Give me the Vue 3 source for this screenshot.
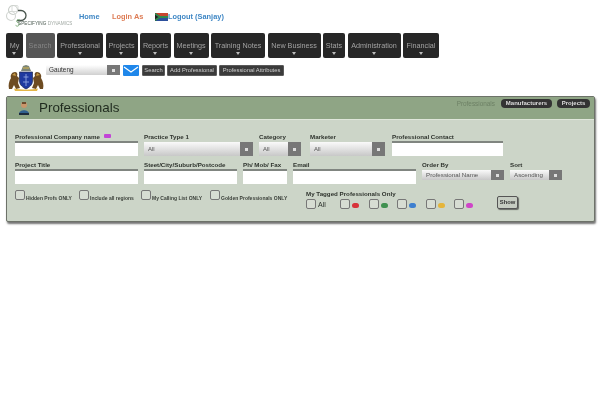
<script setup>
const navItems = [
  { label: 'My', width: 17, arrow: true },
  { label: 'Search', width: 29, active: true },
  { label: 'Professional', width: 46, arrow: true },
  { label: 'Projects', width: 32, arrow: true },
  { label: 'Reports', width: 31, arrow: true },
  { label: 'Meetings', width: 35, arrow: true },
  { label: 'Training Notes', width: 54, arrow: true },
  { label: 'New Business', width: 53, arrow: true },
  { label: 'Stats', width: 22, arrow: true },
  { label: 'Administration', width: 53, arrow: true },
  { label: 'Financial', width: 36, arrow: true }
]
const toolButtons = [
  { label: 'Search', width: 23 },
  { label: 'Add Professional', width: 50 },
  { label: 'Professional Attributes', width: 65 }
]
const row1 = [
  { label: 'Professional Company name', width: 123, gap: 6, tag: true },
  { label: 'Practice Type 1', width: 109, gap: 6, select: 'All' },
  { label: 'Category', width: 42, gap: 9, select: 'All' },
  { label: 'Marketer', width: 75, gap: 7, select: 'All' },
  { label: 'Professional Contact', width: 111, gap: 0 }
]
const row2 = [
  { label: 'Project Title', width: 123, gap: 6 },
  { label: 'Steet/City/Suburb/Postcode', width: 93, gap: 6 },
  { label: 'Ph/ Mob/ Fax', width: 44, gap: 6 },
  { label: 'Email', width: 123, gap: 6 },
  { label: 'Order By', width: 82, gap: 6, select: 'Professional Name', small: true },
  { label: 'Sort', width: 52, gap: 0, select: 'Ascending', small: true }
]
const checks = [
  { label: 'Hidden Profs ONLY', width: 64 },
  { label: 'Include all regions', width: 62 },
  { label: 'My Calling List ONLY', width: 69 },
  { label: 'Golden Professionals ONLY', width: 78 }
]
const tags = ['#d8333a', '#3f9150', '#3d7fcf', '#e5b53a', '#cf45c8']
</script>

<template>
  <div class="page">
    <header class="top">
      <svg class="logo" viewBox="0 0 66 24" width="66" height="24">
        <circle cx="7" cy="5" r="4.5" fill="none" stroke="#c9cec9" stroke-width="1.1" />
        <circle cx="5" cy="11" r="4.5" fill="none" stroke="#d2d6d2" stroke-width="1.1" />
        <rect x="6" y="0.5" width="6" height="6" rx="1" fill="none" stroke="#d0d4d0" stroke-width="0.8" />
        <path d="M12 5.5 h3 a5 5 0 0 1 0 10 h-4" fill="none" stroke="#47534b" stroke-width="1.3" />
        <path d="M14 15 c-3 -1 -4 1 -3 2 s3 1 2 3 s-3 1 -3.5 0" fill="none" stroke="#6fa56c" stroke-width="0.9" />
        <text x="12" y="20.2" font-size="4.7" font-family="Liberation Sans, sans-serif" fill="#4b5a50">SPECIFYING<tspan fill="#a0a8a2"> DYNAMICS</tspan></text>
      </svg>
      <a class="link home">Home</a>
      <a class="link login">Login As</a>
      <svg class="flag" viewBox="0 0 13 8" width="13" height="8">
        <rect width="13" height="4" fill="#c8452f" />
        <rect y="4" width="13" height="4" fill="#2c4f9c" />
        <path d="M0 0 L6 4 L0 8 Z" fill="#222" />
        <path d="M0 0.8 L5 4 L0 7.2 M5 4 H13" fill="none" stroke="#2f8a4f" stroke-width="1.8" />
      </svg>
      <a class="link logout">Logout (Sanjay)</a>
    </header>

    <nav class="nav">
      <div
        v-for="item in navItems"
        :key="item.label"
        class="nav-item"
        :class="{ active: item.active }"
        :style="{ width: item.width + 'px' }"
      >
        <span>{{ item.label }}</span>
        <i v-if="item.arrow" class="nav-arrow"></i>
      </div>
    </nav>

    <section class="toolbar">
      <svg class="arms" viewBox="0 0 36 26" width="36" height="26">
        <path d="M1 24 C0 20 1 16 3 13 C2 10 4 7 7 7 C9 7 10 9 9 11 L11 13 L10 18 L12 23 L8 24 L6 20 L4 24 Z" fill="#6e4c22" />
        <path d="M35 24 C36 20 35 16 33 13 C34 10 32 7 29 7 C27 7 26 9 27 11 L25 13 L26 18 L24 23 L28 24 L30 20 L32 24 Z" fill="#6e4c22" />
        <path d="M4 10 L7 8 L8 11 Z M32 10 L29 8 L28 11 Z" fill="#c79a45" />
        <path d="M13 6 L15 1 L18 0 L21 1 L23 6 Z" fill="#7c8578" />
        <path d="M15 3 H21" stroke="#d8b64a" stroke-width="1" />
        <path d="M11.5 7 H24.5 V16 C24.5 20 21 22.5 18 24 C15 22.5 11.5 20 11.5 16 Z" fill="#1f3aa0" stroke="#20284a" stroke-width="0.7" />
        <path d="M18 9 V21 M15.5 12 H20.5 M15 17 H21" stroke="#8ea4e0" stroke-width="0.9" />
        <path d="M6 23.5 C12 25 24 25 30 23.5 L29 26 H7 Z" fill="#e3b648" />
      </svg>
      <div class="region">
        <span>Gauteng</span>
        <b class="sel-btn"><i></i></b>
      </div>
      <svg class="mail" viewBox="0 0 16 11" width="16" height="11">
        <rect width="16" height="11" rx="1" fill="#1f87ea" />
        <path d="M1 2 L8 7 L15 2" fill="none" stroke="#fff" stroke-width="1.2" />
      </svg>
      <div class="tool-buttons">
        <div
          v-for="b in toolButtons"
          :key="b.label"
          class="tool-btn"
          :style="{ width: b.width + 'px' }"
        >{{ b.label }}</div>
      </div>
    </section>

    <section class="panel">
      <div class="panel-head">
        <svg class="person" viewBox="0 0 12 14" width="12" height="14">
          <circle cx="6" cy="4" r="3" fill="#c9966b" />
          <path d="M4 1 h4 v2 h-4z" fill="#6d4a2c" />
          <path d="M1 13 C1 8 11 8 11 13 Z" fill="#2f5f8f" />
          <rect x="1" y="12" width="10" height="2" fill="#1d2b3d" />
        </svg>
        <h1>Professionals</h1>
        <div class="tabs">
          <span class="tab-text">Professionals</span>
          <span class="pill manu">Manufacturers</span>
          <span class="pill proj">Projects</span>
        </div>
      </div>

      <div class="panel-body">
        <div class="form-row first">
          <div
            v-for="f in row1"
            :key="f.label"
            class="field"
            :style="{ width: f.width + 'px', marginRight: f.gap + 'px' }"
          >
            <label>{{ f.label }}<i v-if="f.tag" class="label-tag"></i></label>
            <div v-if="f.select" class="select">
              <span>{{ f.select }}</span>
              <b class="sel-btn"><i></i></b>
            </div>
            <input v-else class="input" type="text" />
          </div>
        </div>

        <div class="form-row second">
          <div
            v-for="f in row2"
            :key="f.label"
            class="field"
            :style="{ width: f.width + 'px', marginRight: f.gap + 'px' }"
          >
            <label>{{ f.label }}</label>
            <div v-if="f.select" class="select small">
              <span>{{ f.select }}</span>
              <b class="sel-btn"><i></i></b>
            </div>
            <input v-else class="input" type="text" />
          </div>
        </div>

        <div class="bottom">
          <div class="checks">
            <div
              v-for="c in checks"
              :key="c.label"
              class="check"
              :style="{ width: c.width + 'px' }"
            >
              <i class="box"></i>
              <span>{{ c.label }}</span>
            </div>
          </div>
          <div class="tagged">
            <div class="tagged-title">My Tagged Professionals Only</div>
            <div class="tagged-row">
              <div class="tag-all"><i class="box"></i><span>All</span></div>
              <div v-for="t in tags" :key="t" class="tag-item">
                <i class="box"></i>
                <i class="blob" :style="{ background: t }"></i>
              </div>
            </div>
          </div>
          <div class="show">Show</div>
        </div>
      </div>
    </section>
  </div>
</template>

<style scoped>
.page {
  width: 600px;
  height: 400px;
  background: #fff;
  font-family: "Liberation Sans", Arial, sans-serif;
  overflow: hidden;
  filter: blur(0.45px);
  box-sizing: border-box;
  padding: 5px 5px 0 6px;
}
.top {
  display: flex;
  align-items: center;
  height: 24px;
}
.logo { flex: none; width: 66px; }
.link { font-size: 7.4px; font-weight: bold; line-height: 1; margin-top: -1px; }
.home { color: #3f87c5; margin-left: 7px; width: 33px; }
.login { color: #dd7c55; width: 43px; }
.flag { flex: none; margin-top: -1px; }
.logout { color: #3f87c5; }

.nav {
  display: flex;
  gap: 2.5px;
  margin-top: 4px;
  height: 25px;
}
.nav-item {
  flex: none;
  position: relative;
  box-sizing: border-box;
  background: #272727;
  border-radius: 2px;
  color: #a3a3a3;
  font-size: 7.2px;
  text-align: center;
  line-height: 25px;
  white-space: nowrap;
}
.nav-item.active { background: #565656; color: #858585; }
.nav-arrow {
  position: absolute;
  left: 50%;
  bottom: 3px;
  margin-left: -2.5px;
  border: 2.5px solid transparent;
  border-top: 3px solid #bdbdbd;
  border-bottom: 0;
}

.toolbar {
  display: flex;
  align-items: flex-start;
  margin-top: 7px;
  height: 26px;
}
.arms { flex: none; margin-left: 2px; }
.region {
  display: flex;
  justify-content: space-between;
  box-sizing: border-box;
  width: 74px;
  height: 10px;
  margin-left: 2px;
  background: linear-gradient(#fff, #d0d0d0);
  border-radius: 1px;
  font-size: 6.4px;
  line-height: 10px;
  color: #333;
  padding-left: 3px;
}
.mail { flex: none; margin: 0 0 0 3px; }
.tool-buttons { display: flex; gap: 2px; margin-left: 3px; }
.tool-btn {
  flex: none;
  height: 11px;
  box-sizing: border-box;
  background: #3b3b3b;
  border: 1px solid #5a5a5a;
  border-radius: 1px;
  color: #cfcfcf;
  font-size: 5.8px;
  line-height: 9px;
  text-align: center;
  white-space: nowrap;
}

.sel-btn {
  flex: none;
  display: flex;
  align-items: center;
  justify-content: center;
  width: 13px;
  height: 100%;
  background: #777;
}
.sel-btn i { width: 3px; height: 3px; background: #ddd; }

.panel {
  margin-top: 5px;
  width: 589px;
  height: 126px;
  background: #ccd5c8;
  border: 1px solid #6d7269;
  border-radius: 2px;
  box-sizing: border-box;
  box-shadow: 1px 2px 2px rgba(0, 0, 0, 0.55);
}
.panel-head {
  display: flex;
  align-items: center;
  height: 22px;
  background: #8fa585;
  border-bottom: 1px solid #dfe6da;
  padding-left: 11px;
}
.person { flex: none; }
h1 {
  margin: -1px 0 0 9px;
  font-size: 13.4px;
  font-weight: normal;
  color: #1f2a1e;
}
.tabs {
  display: flex;
  align-items: center;
  margin-left: auto;
  margin-right: 4px;
  margin-top: -9px;
}
.tab-text { font-size: 6.4px; color: #6d8065; margin-right: 6px; }
.pill {
  height: 9px;
  line-height: 9px;
  background: #333;
  border-radius: 4px;
  color: #ddd;
  font-size: 6px;
  text-align: center;
  font-weight: bold;
}
.manu { width: 51px; margin-right: 5px; }
.proj { width: 33px; }

.panel-body { padding: 0 0 0 8px; }
.form-row { display: flex; align-items: flex-start; }
.form-row.first { margin-top: 12px; }
.form-row.second { margin-top: 4px; }
.field { flex: none; display: flex; flex-direction: column; }
label {
  display: flex;
  align-items: center;
  height: 8px;
  font-size: 6.2px;
  font-weight: bold;
  color: #2e332d;
  white-space: nowrap;
  margin-bottom: 1px;
}
.label-tag {
  width: 7px;
  height: 4px;
  border-radius: 1px;
  background: #c244d6;
  margin-left: 4px;
}
.input {
  display: block;
  width: 100%;
  height: 15px;
  box-sizing: border-box;
  border: 0;
  border-top: 2px solid #808580;
  background: #fff;
  padding: 0;
  outline: none;
}
.select {
  display: flex;
  justify-content: space-between;
  height: 14px;
  margin-top: 1px;
  background: linear-gradient(#fafafa, #c8c8c8);
  font-size: 6px;
  line-height: 14px;
  color: #555;
  padding-left: 4px;
}
.select.small { height: 10px; line-height: 10px; font-size: 6.2px; }

.bottom { display: flex; align-items: flex-start; margin-top: 6px; }
.checks { display: flex; width: 291px; flex: none; }
.check { flex: none; display: flex; align-items: flex-start; font-size: 5px; font-weight: bold; color: #3a3f39; white-space: nowrap; }
.check span { margin: 5px 0 0 1px; }
.box {
  flex: none;
  display: block;
  width: 10px;
  height: 10px;
  box-sizing: border-box;
  border: 1px solid #777;
  border-radius: 2px;
  background: #d7ddd3;
}
.tagged { width: 191px; flex: none; }
.tagged-title { font-size: 6.2px; font-weight: bold; color: #2e332d; line-height: 7px; }
.tagged-row { display: flex; margin-top: 2px; align-items: center; }
.tag-all { display: flex; align-items: center; width: 34px; font-size: 7px; color: #2e332d; }
.tag-all span { margin-left: 2px; }
.tag-item { width: 28.6px; display: flex; align-items: center; }
.blob { width: 7px; height: 5px; border-radius: 2.5px; margin: 3px 0 0 2px; }
.show {
  flex: none;
  width: 21px;
  height: 13px;
  margin-top: 6px;
  box-sizing: border-box;
  border: 1px solid #555;
  border-radius: 2px;
  background: #c6cdc2;
  box-shadow: 1px 1px 1px rgba(0, 0, 0, 0.5);
  font-size: 5.8px;
  font-weight: bold;
  line-height: 11px;
  text-align: center;
  color: #333;
}
</style>
